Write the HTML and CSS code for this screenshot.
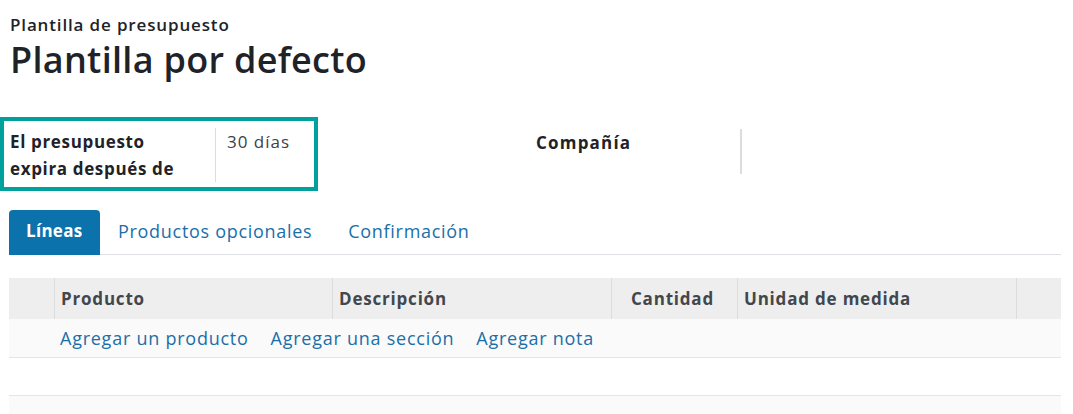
FILE: index.html
```html
<!DOCTYPE html>
<html lang="es">
<head>
<meta charset="utf-8">
<title>Plantilla por defecto</title>
<link rel="stylesheet" href="styles.css">
</head>
<body>
<div class="sheet">
  <div class="heading">
    <div class="subtitle">Plantilla de presupuesto</div>
    <h1 class="title">Plantilla por defecto</h1>
  </div>

  <div class="groups">
    <div class="group">
      <div class="field highlight">
        <div class="label">El presupuesto<br>expira después de</div>
        <div class="value">30 días</div>
      </div>
    </div>
    <div class="group group-right">
      <div class="field">
        <div class="label">Compañía</div>
        <div class="value"></div>
      </div>
    </div>
  </div>

  <div class="tabs">
    <a class="tab active">Líneas</a>
    <a class="tab">Productos opcionales</a>
    <a class="tab">Confirmación</a>
    <div class="tab-fill"></div>
  </div>

  <div class="table">
    <div class="row head">
      <div class="cell c-handle"></div>
      <div class="cell c-prod">Producto</div>
      <div class="cell c-desc">Descripción</div>
      <div class="cell c-qty">Cantidad</div>
      <div class="cell c-uom">Unidad de medida</div>
      <div class="cell c-last"></div>
    </div>
    <div class="row add">
      <div class="cell c-handle"></div>
      <div class="add-links">
        <a class="link">Agregar un producto</a>
        <a class="link">Agregar una sección</a>
        <a class="link">Agregar nota</a>
      </div>
    </div>
    <div class="row empty"></div>
    <div class="row foot"></div>
  </div>
</div>
</body>
</html>
```

FILE: styles.css
```css
* { box-sizing: border-box; }

html, body {
  margin: 0;
  padding: 0;
  background: #ffffff;
}

body {
  font-family: "Open Sans", "DejaVu Sans", sans-serif;
  color: #212529;
  overflow: hidden;
  height: 414px;
}

.sheet {
  width: 1073px;
  height: 414px;
  overflow: hidden;
  padding: 0 12px 0 9px;
}

.heading {
  padding-top: 13px;
  padding-left: 1px;
}

.subtitle {
  font-size: 17px;
  font-weight: 600;
  line-height: 24px;
  color: #1f2328;
  letter-spacing: 0.85px;
}

.title {
  margin: 0;
  font-size: 36px;
  font-weight: 600;
  line-height: 46px;
  color: #1f2328;
  letter-spacing: 0.3px;
}

.groups {
  display: flex;
  margin-top: 34px;
  margin-left: -9px;
}

.group {
  width: 526px;
  display: flex;
  align-items: flex-start;
}

.group-right {
  padding-left: 1px;
}

.field {
  display: flex;
  align-items: stretch;
}

.highlight {
  border: 4px solid #00a09d;
  width: 318px;
  padding: 8px 0 5px 6px;
  height: 74px;
}

.label {
  width: 206px;
  flex-shrink: 0;
  font-size: 17px;
  font-weight: 700;
  line-height: 27px;
  color: #1f2328;
  border-right: 1px solid #dcdcdc;
  margin-top: -1px;
  letter-spacing: 0.65px;
  white-space: nowrap;
}

.group-right .field {
  padding: 12px 0 0 9px;
}

.group-right .label {
  height: 45px;
  border-right: 2px solid #dcdcdc;
  margin-top: 0;
  letter-spacing: 1.2px;
}

.value {
  padding-left: 11px;
  font-size: 17px;
  line-height: 27px;
  color: #3c4146;
  margin-top: -1px;
  letter-spacing: 1px;
  white-space: nowrap;
}

.tabs {
  display: flex;
  align-items: stretch;
  margin-top: 19px;
  height: 45px;
}

.tab {
  display: flex;
  align-items: center;
  padding: 0 18px 2px 18px;
  font-size: 18px;
  color: #1a6fa8;
  border-bottom: 1px solid #dee2e6;
  white-space: nowrap;
  letter-spacing: 0.7px;
}

.tab.active {
  background: #0b72ab;
  color: #ffffff;
  font-size: 17px;
  font-weight: 700;
  letter-spacing: 0.3px;
  border-radius: 4px 4px 0 0;
  border-bottom-color: #0b72ab;
  padding: 0 17px 4px 17px;
  width: 91px;
}

.tab-fill {
  flex: 1;
  border-bottom: 1px solid #dee2e6;
}

.table {
  margin-top: 23px;
  width: 1052px;
}

.row {
  display: flex;
}

.head {
  height: 41px;
  background: #eeeeee;
}

.head .cell {
  display: flex;
  align-items: center;
  padding: 0 6px;
  font-size: 17px;
  font-weight: 700;
  color: #42474d;
  border-right: 1px solid #dcdcdc;
  white-space: nowrap;
  letter-spacing: 0.8px;
}

.c-handle { width: 46px; flex-shrink: 0; }
.c-prod { width: 278px; }
.c-desc { width: 279px; }
.head .c-qty { width: 126px; justify-content: flex-end; padding-right: 23px; }
.c-uom { width: 279px; }
.head .c-last { flex: 1; border-right: none; }

.add {
  height: 39px;
  background: #fafafa;
  border-bottom: 1px solid #e5e5e5;
  align-items: center;
}

.add-links {
  display: flex;
  gap: 22px;
  padding-left: 5px;
  padding-bottom: 1px;
}

.link {
  font-size: 18px;
  color: #1a6fa8;
  white-space: nowrap;
  letter-spacing: 0.75px;
}

.empty {
  height: 38px;
  background: #ffffff;
  border-bottom: 1px solid #e5e5e5;
}

.foot {
  height: 18px;
  background: #fafafa;
}
```
